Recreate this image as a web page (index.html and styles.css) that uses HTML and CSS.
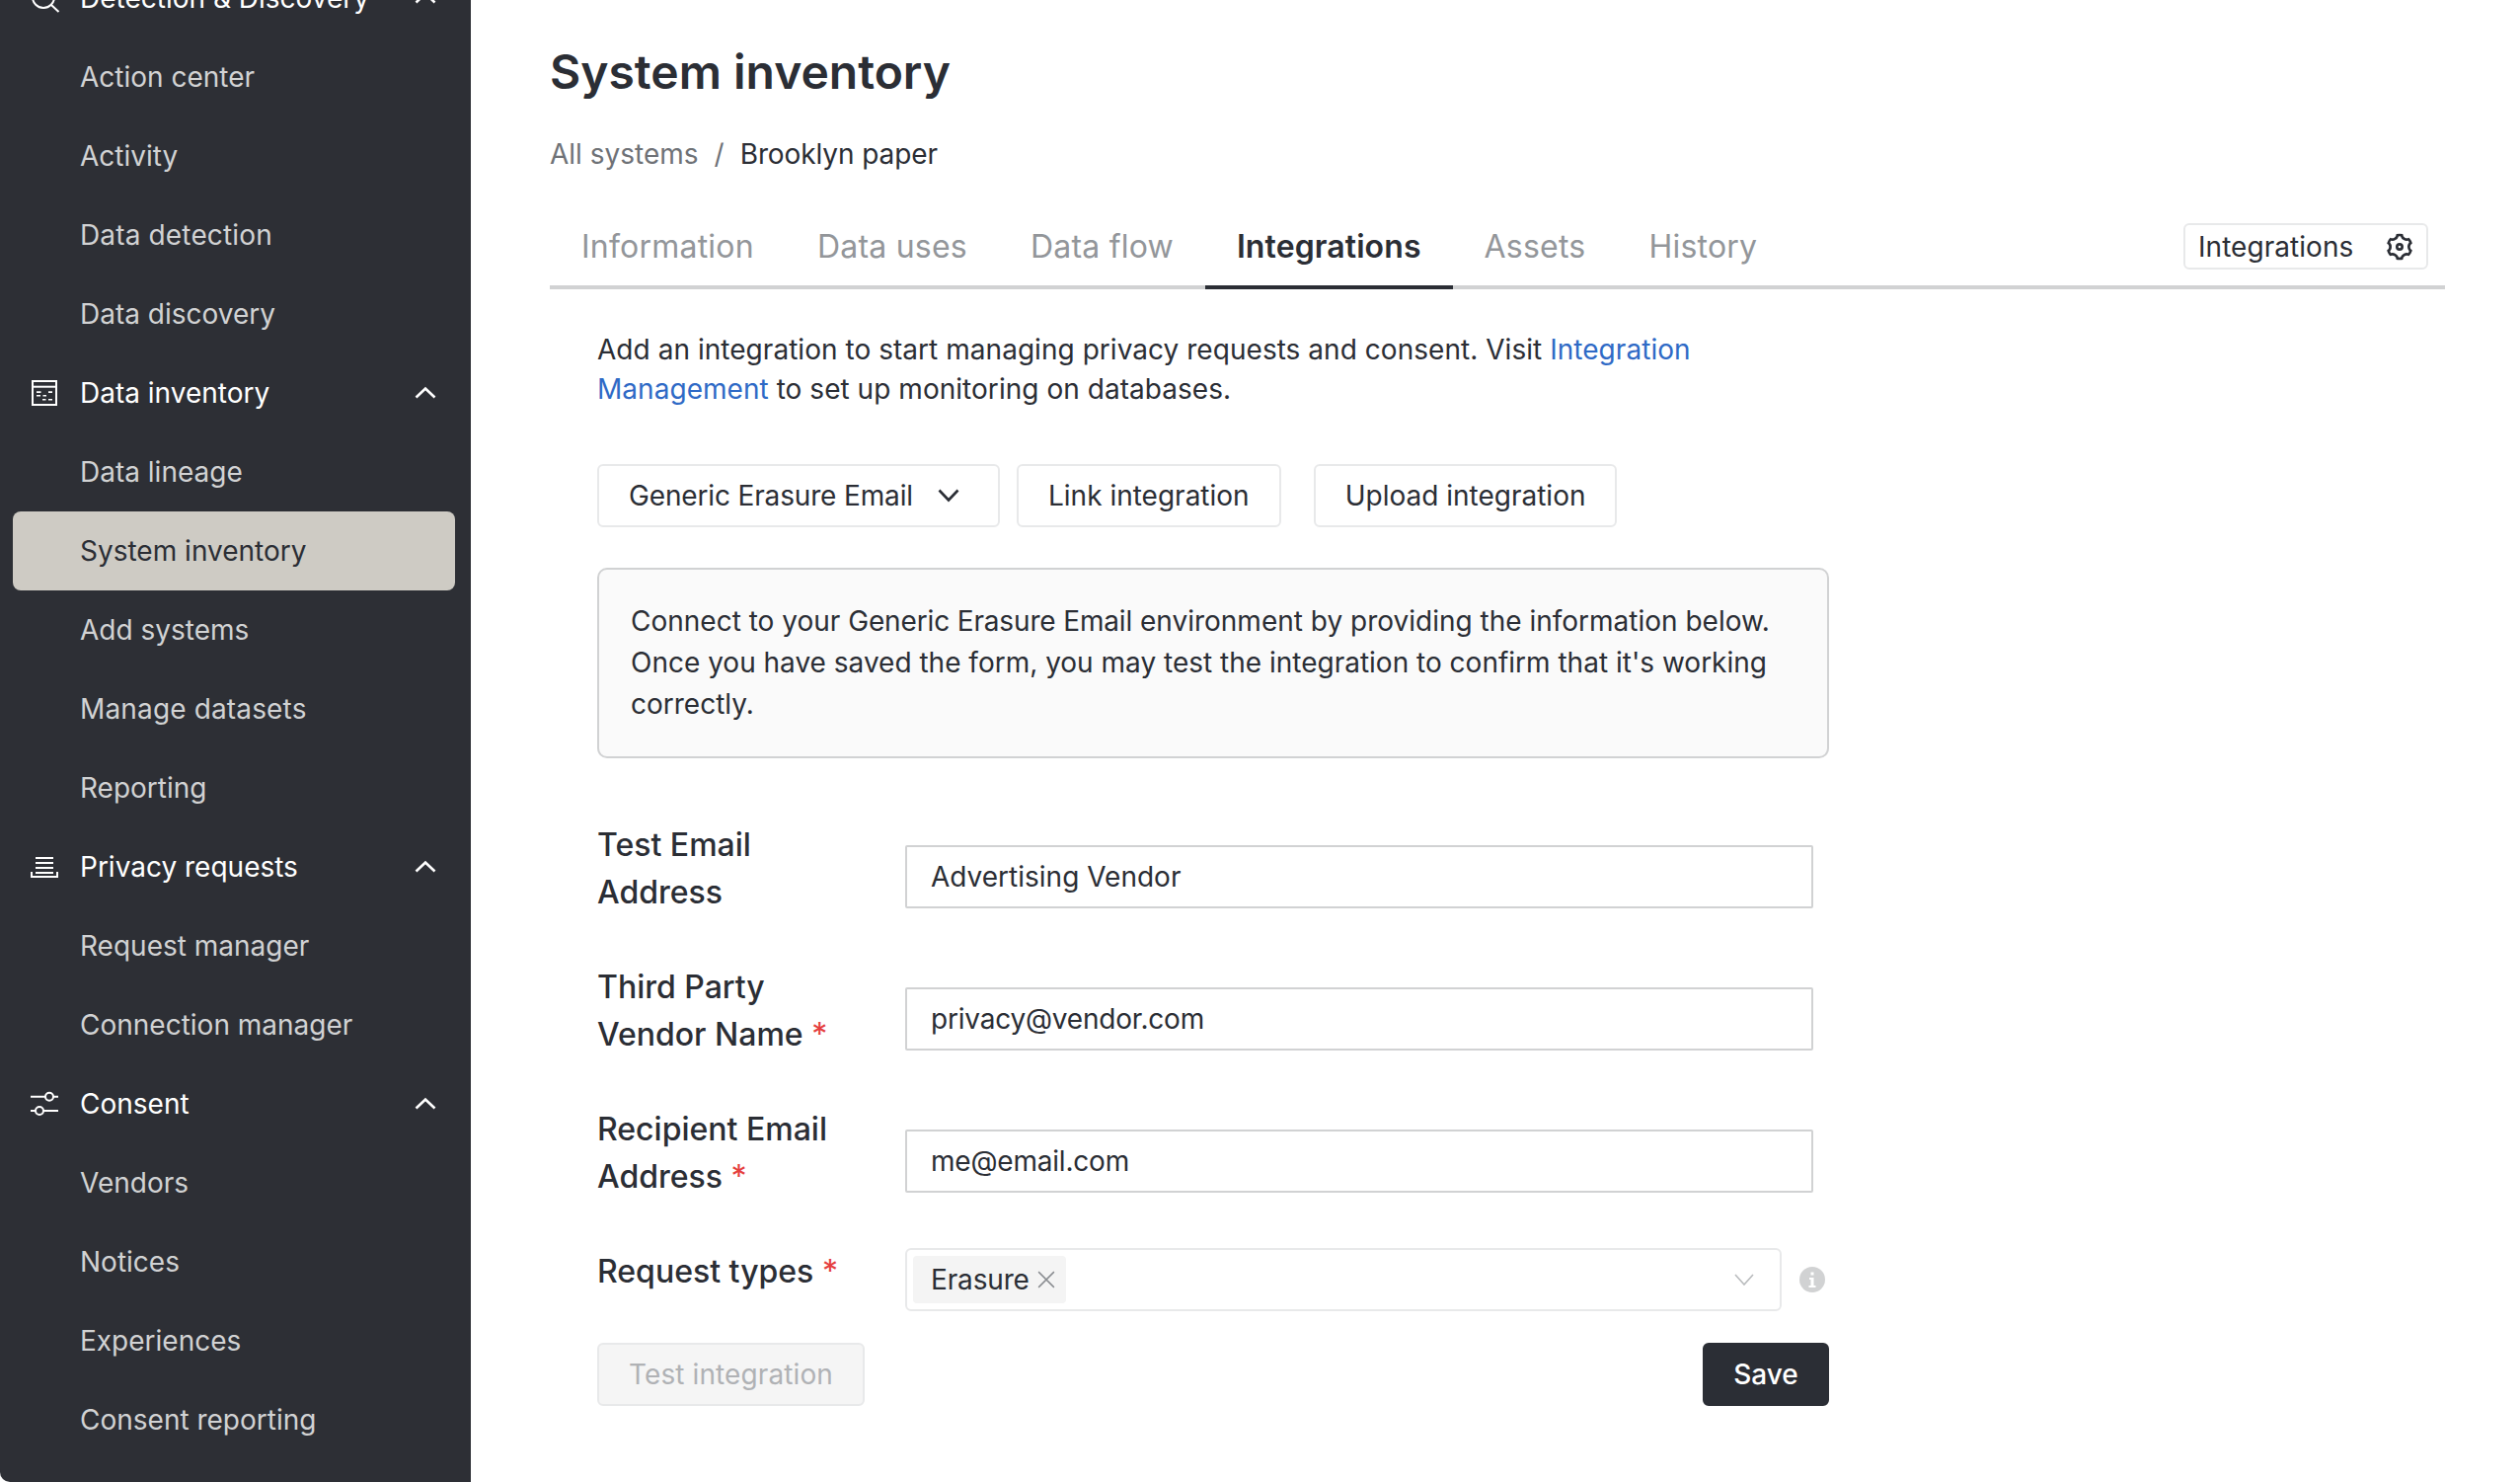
FILE: index.html
```html
<!DOCTYPE html>
<html lang="en">
<head>
<meta charset="utf-8">
<title>System inventory</title>
<link rel="stylesheet" href="styles.css">
</head>
<body>
<div class="app">
  <nav class="sidebar">
    <div class="nav-group">
      <svg class="nav-icon" viewBox="0 0 28 28"><circle class="ln" cx="13" cy="13" r="11"/><path class="ln" d="M21 21l7.500 7"/></svg>
      <span class="nav-title">Detection &amp; Discovery</span>
      <svg class="chev" viewBox="0 0 24 24"><path d="M2.500 16.500L12 7.500l9.500 9"/></svg>
    </div>
    <a class="nav-item">Action center</a>
    <a class="nav-item">Activity</a>
    <a class="nav-item wide">Data detection</a>
    <a class="nav-item">Data discovery</a>
    <div class="nav-group">
      <svg class="nav-icon" viewBox="0 0 28 28"><rect class="ln" x="2" y="2" width="24" height="24"/><path class="ln" d="M2 7.700h24"/><path d="M6 12.200h4.500v1.700H6zM18 12.200h4v1.700h-4zM6 15.900h4v1.700H6zM12.500 15.900H16v1.700h-3.500zM12 19.900h3.500v1.700H12zM18 19.900h4v1.700h-4z"/></svg>
      <span class="nav-title">Data inventory</span>
      <svg class="chev" viewBox="0 0 24 24"><path d="M2.500 16.500L12 7.500l9.500 9"/></svg>
    </div>
    <a class="nav-item">Data lineage</a>
    <a class="nav-item active">System inventory</a>
    <a class="nav-item">Add systems</a>
    <a class="nav-item wide">Manage datasets</a>
    <a class="nav-item">Reporting</a>
    <div class="nav-group">
      <svg class="nav-icon" viewBox="0 0 28 28"><path d="M5 4h18v2H5zM5 9h18v2H5zM5 14h18v2H5zM5 19h18v2H5zM0 19h2v4h24v-4h2v6H0z"/></svg>
      <span class="nav-title">Privacy requests</span>
      <svg class="chev" viewBox="0 0 24 24"><path d="M2.500 16.500L12 7.500l9.500 9"/></svg>
    </div>
    <a class="nav-item">Request manager</a>
    <a class="nav-item">Connection manager</a>
    <div class="nav-group">
      <svg class="nav-icon" viewBox="0 0 28 28"><path class="ln" d="M0 6.700h15M23 6.700h5M0 21h5M13 21h15"/><circle class="ln" cx="19" cy="6.700" r="4"/><circle class="ln" cx="9" cy="21" r="4"/></svg>
      <span class="nav-title">Consent</span>
      <svg class="chev" viewBox="0 0 24 24"><path d="M2.500 16.500L12 7.500l9.500 9"/></svg>
    </div>
    <a class="nav-item">Vendors</a>
    <a class="nav-item">Notices</a>
    <a class="nav-item">Experiences</a>
    <a class="nav-item">Consent reporting</a>
  </nav>

  <main class="main">
    <h1 class="page-title">System inventory</h1>
    <div class="breadcrumb">
      <span class="crumb-link">All systems</span>
      <span class="crumb-sep">/</span>
      <span class="crumb-current">Brooklyn paper</span>
    </div>

    <div class="tabs">
      <a class="tab">Information</a>
      <a class="tab">Data uses</a>
      <a class="tab">Data flow</a>
      <a class="tab active">Integrations</a>
      <a class="tab">Assets</a>
      <a class="tab">History</a>
      <div class="tabs-extra">
        <button class="extra-btn">
          <span>Integrations</span>
          <svg class="gear" viewBox="0 0 24 24"><path d="M3.34 17a10.02 10.02 0 0 1-.978-2.326 3 3 0 0 0 .002-5.347A9.99 9.99 0 0 1 4.865 4.99a3 3 0 0 0 4.631-2.674 9.99 9.99 0 0 1 5.007.002 3 3 0 0 0 4.632 2.672c.579.59 1.093 1.261 1.525 2.01.433.749.757 1.53.978 2.326a3 3 0 0 0-.002 5.347 9.99 9.99 0 0 1-2.501 4.337 3 3 0 0 0-4.631 2.674 9.99 9.99 0 0 1-5.007-.002 3 3 0 0 0-4.632-2.672A10.018 10.018 0 0 1 3.34 17zm5.66.196a4.993 4.993 0 0 1 2.25 2.77c.499.047 1 .048 1.499.001A4.993 4.993 0 0 1 15 17.197a4.993 4.993 0 0 1 3.525-.565c.29-.408.54-.843.748-1.298A4.993 4.993 0 0 1 18 12c0-1.26.47-2.437 1.273-3.334a8.126 8.126 0 0 0-.75-1.298A4.993 4.993 0 0 1 15 6.804a4.993 4.993 0 0 1-2.25-2.77c-.499-.047-1-.048-1.499-.001A4.993 4.993 0 0 1 9 6.803a4.993 4.993 0 0 1-3.525.565 7.99 7.99 0 0 0-.748 1.298A4.993 4.993 0 0 1 6 12c0 1.26-.47 2.437-1.273 3.334a8.126 8.126 0 0 0 .75 1.298A4.993 4.993 0 0 1 9 17.196zM12 15a3 3 0 1 1 0-6 3 3 0 0 1 0 6zm0-2a1 1 0 1 0 0-2 1 1 0 0 0 0 2z"/></svg>
        </button>
      </div>
    </div>

    <section class="panel">
      <p class="intro">Add an integration to start managing privacy requests and consent. Visit <a class="link">Integration Management</a> to set up monitoring on databases.</p>

      <div class="actions">
        <button class="btn btn-select">
          <span class="tight">Generic Erasure Email</span>
          <svg class="btn-chev" viewBox="0 0 24 24"><path d="M2.500 6.500L12 16.500l9.500-10"/></svg>
        </button>
        <button class="btn">Link integration</button>
        <button class="btn btn-upload">Upload integration</button>
      </div>

      <div class="notice">Connect to your <span class="tight">Generic Erasure Email</span> environment by providing the information below. Once you have saved the form, you may test the integration to confirm that it's working correctly.</div>

      <form class="form">
        <div class="row tall">
          <label class="label">Test Email Address</label>
          <div class="control"><input class="input" value="Advertising Vendor"></div>
        </div>
        <div class="row tall">
          <label class="label">Third Party Vendor Name <span class="req">*</span></label>
          <div class="control"><input class="input input-email" value="privacy@vendor.com"></div>
        </div>
        <div class="row tall">
          <label class="label">Recipient Email Address <span class="req">*</span></label>
          <div class="control"><input class="input input-email" value="me@email.com"></div>
        </div>
        <div class="row">
          <label class="label">Request types <span class="req">*</span></label>
          <div class="control select-line">
            <div class="select">
              <span class="tag"><span class="tight">Erasure</span>
                <svg class="tag-x" viewBox="0 0 16 16"><path d="M1 1l14 14M15 1L1 15"/></svg>
              </span>
              <svg class="select-chev" viewBox="0 0 20 12"><path d="M1 1l9 10 9-10"/></svg>
            </div>
            <svg class="info" viewBox="0 0 26 26"><circle cx="13" cy="13" r="13"/><rect class="info-mark" x="11.500" y="5.500" width="3" height="3"/><path class="info-mark" d="M10 11h4.500v8H16.500v2h-7v-2h2v-6H10z"/></svg>
          </div>
        </div>
        <div class="form-footer">
          <button type="button" class="btn btn-disabled">Test integration</button>
          <button type="button" class="btn btn-primary">Save</button>
        </div>
      </form>
    </section>
  </main>
</div>
</body>
</html>
```
FILE: styles.css
```css
* { box-sizing: border-box; }
html, body { margin: 0; height: 100%; }
body {
  background: #fff;
  color: #2b2e35;
  font-family: Inter, "Liberation Sans", sans-serif;
  overflow: hidden;
}
.app { display: flex; height: 1501px; overflow: hidden; }
.tight { letter-spacing: -0.15px; }

/* Sidebar */
.sidebar {
  flex: 0 0 477px;
  height: 1501px;
  background: #2d2f35;
  border-bottom-left-radius: 10px;
  overflow: hidden;
  padding: 0 16px 0 13px;
}
.sidebar > :first-child { margin-top: -42px; }
.nav-group, .nav-item {
  display: flex;
  align-items: center;
  height: 80px;
  font-size: 28px;
  border-radius: 8px;
  width: 448px;
}
.nav-group { color: #fff; padding-left: 18px; }
.nav-icon { width: 28px; height: 28px; fill: #fff; flex: none; margin-right: 22px; overflow: visible; }
.nav-icon .ln { fill: #2d2f35; stroke: #fff; stroke-width: 2; }
.nav-title { flex: 1; }
.chev { width: 24px; height: 24px; fill: none; stroke: #fff; stroke-width: 2.6; margin-right: 18px; }
.nav-item { color: #d1d2d3; padding-left: 68px; }
.nav-item.wide { letter-spacing: 0.15px; }
.nav-item.active { background: #cecbc4; color: #2b2e35; }

/* Main */
.main { flex: 1; min-width: 0; padding: 43px 76px 0 80px; }
.page-title { margin: 0; font-size: 48px; line-height: 60px; font-weight: 600; color: #2b2e35; }
.breadcrumb { display: flex; align-items: center; margin-top: 33px; height: 40px; font-size: 28px; line-height: 40px; }
.crumb-link { color: #6f7277; }
.crumb-sep { color: #6f7277; margin: 0 16px; }
.crumb-current { color: #2b2e35; letter-spacing: -0.1px; }

.tabs { display: flex; align-items: stretch; margin-top: 34px; height: 83px; border-bottom: 4px solid #d1d2d3; }
.tab {
  display: flex; align-items: center;
  height: 83px;
  padding: 0 32px;
  border-bottom: 4px solid transparent;
  font-size: 32px;
  letter-spacing: 0.22px;
  color: #93969a;
}
.tab.active { font-weight: 600; letter-spacing: 0.1px; color: #2b2e35; border-bottom-color: #2b2e35; }
.tabs-extra { margin-left: auto; padding: 16px 17px 0 0; }
.extra-btn {
  display: flex; align-items: center; justify-content: space-between;
  width: 248px; height: 47px;
  padding: 0 11px 0 13px;
  background: #fff;
  border: 2px solid #e8e9ea;
  border-radius: 6px;
  font: inherit; font-size: 28px;
  letter-spacing: 0.05px;
  color: #2b2e35;
}
.gear { width: 32px; height: 32px; fill: #2b2e35; }

.panel { width: 1296px; padding: 41px 0 0 48px; }
.intro { margin: 0; font-size: 28px; line-height: 40px; letter-spacing: 0.04px; color: #2b2e35; }
.link { color: #2f6ac6; }
.actions { display: flex; gap: 17px; margin-top: 56px; }
.btn {
  display: inline-flex; align-items: center; justify-content: center;
  height: 64px;
  padding: 0 30px;
  background: #fff;
  border: 2px solid #e8e9ea;
  border-radius: 6px;
  font: inherit; font-size: 28px;
  color: #2b2e35;
}
.btn-select { width: 408px; justify-content: flex-start; gap: 24px; }
.btn-chev { width: 24px; height: 24px; fill: none; stroke: #2b2e35; stroke-width: 2.6; }
.btn-upload { margin-left: 16px; }

.notice {
  margin-top: 41px;
  padding: 31px 32px 32px;
  background: #fafafa;
  border: 2px solid #d1d2d3;
  border-radius: 10px;
  font-size: 28px;
  line-height: 42px;
  color: #2b2e35;
}

.form { margin-top: 64px; }
.row { display: flex; margin-bottom: 48px; }
.row:nth-last-child(2) { margin-bottom: 32px; }
.label { flex: 0 0 312px; padding-right: 60px; font-size: 32px; line-height: 48px; font-weight: 500; color: #2b2e35; }
.req { color: #e53e3e; font-weight: 400; }
.control { width: 920px; }
.tall .control { padding-top: 24px; }
.input {
  display: block; width: 100%; height: 64px;
  padding: 0 24px;
  border: 2px solid #d1d2d3;
  border-radius: 2px;
  font: inherit; font-size: 28px;
  color: #2b2e35;
  background: #fff;
}
.input-email { letter-spacing: -0.2px; }
.select-line { display: flex; align-items: center; width: 936px; }
.select {
  flex: none;
  display: flex; align-items: center; justify-content: space-between;
  width: 888px; height: 64px;
  padding: 0 26px 0 6px;
  border: 2px solid #e8e9ea;
  border-radius: 6px;
}
.tag {
  display: flex; align-items: center; gap: 8px;
  height: 48px; padding: 0 11px 0 18px;
  background: #f4f4f4; border-radius: 4px;
  font-size: 28px; color: #2b2e35;
}
.tag-x { width: 18px; height: 18px; fill: none; stroke: #8a8d91; stroke-width: 1.3; }
.select-chev { width: 20px; height: 12px; fill: none; stroke: #b9bbbd; stroke-width: 1.6; }
.info { flex: none; width: 26px; height: 26px; margin-left: 18px; }
.info circle { fill: #d1d2d3; }
.info-mark { fill: #fff; }

.form-footer { display: flex; justify-content: space-between; }
.btn-disabled { width: 271px; padding: 0; background: #f5f5f5; color: #b0b2b5; letter-spacing: 0.1px; }
.btn-primary { width: 128px; padding: 0; background: #2b2e35; border-color: #2b2e35; color: #fff; font-weight: 500; }
```
